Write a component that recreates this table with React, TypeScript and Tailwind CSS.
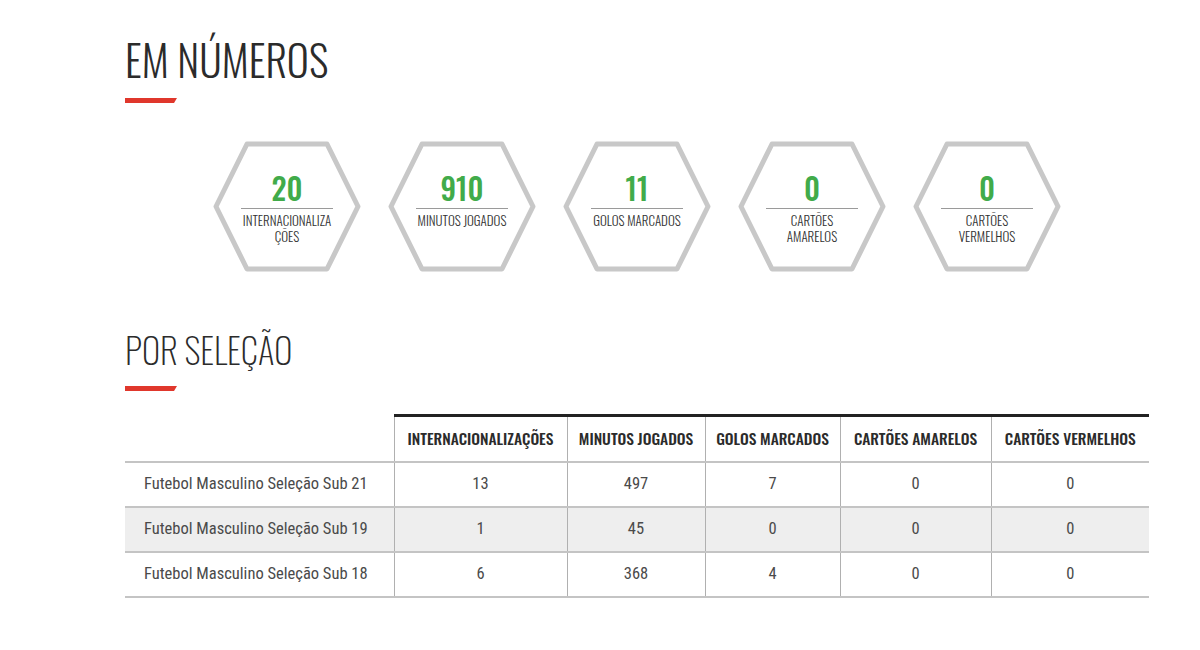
const stats = [
  { value: "20", label: "INTERNACIONALIZA\nÇÕES" },
  { value: "910", label: "MINUTOS JOGADOS" },
  { value: "11", label: "GOLOS MARCADOS" },
  { value: "0", label: "CARTÕES\nAMARELOS" },
  { value: "0", label: "CARTÕES\nVERMELHOS" },
];

const headers = [
  "INTERNACIONALIZAÇÕES",
  "MINUTOS JOGADOS",
  "GOLOS MARCADOS",
  "CARTÕES AMARELOS",
  "CARTÕES VERMELHOS",
];

const rows = [
  { name: "Futebol Masculino Seleção Sub 21", vals: ["13", "497", "7", "0", "0"] },
  { name: "Futebol Masculino Seleção Sub 19", vals: ["1", "45", "0", "0", "0"] },
  { name: "Futebol Masculino Seleção Sub 18", vals: ["6", "368", "4", "0", "0"] },
];

function RedBar() {
  return (
    <svg width="52" height="5" viewBox="0 0 52 5" className="block">
      <polygon points="0,0 52,0 49,5 0,5" fill="#e0372c" />
    </svg>
  );
}

function Hex({ value, label }: { value: string; label: string }) {
  return (
    <div className="relative w-[148px] h-[131px] shrink-0">
      <svg width="148" height="131" viewBox="0 0 148 131" className="absolute inset-0">
        <polygon
          points="3,65.5 34,3 114,3 145,65.5 114,128 34,128"
          fill="none"
          stroke="#c8c8c8"
          strokeWidth="5"
          strokeLinejoin="round"
        />
      </svg>
      <div className="relative flex flex-col items-center pt-[28px] font-['Oswald']">
        <div className="text-[30px] leading-[38px] font-medium text-[#41ab4a]">{value}</div>
        <div className="w-[92px] h-px bg-[#9a9a9a] mt-[1px]" />
        <div className="mt-[3px] text-[13px] leading-[16px] font-light text-[#333] text-center whitespace-pre-line">
          {label}
        </div>
      </div>
    </div>
  );
}

export default function App() {
  return (
    <div className="w-[1200px] h-[650px] bg-white">
      <div className="ml-[125px] w-[1024px] pt-[30px]">
        <h1 className="font-['Oswald'] font-light text-[42px] leading-[58px] text-[#2b2b2b]">
          EM NÚMEROS
        </h1>
        <div className="mt-[10px]">
          <RedBar />
        </div>

        <div className="mt-[38px] flex justify-center gap-[27px]">
          {stats.map((s, i) => (
            <Hex key={i} value={s.value} label={s.label} />
          ))}
        </div>

        <h2 className="mt-[54px] font-['Oswald'] font-extralight text-[35px] leading-[46px] text-[#2b2b2b]">
          POR SELEÇÃO
        </h2>
        <div className="mt-[14px]">
          <RedBar />
        </div>

        <table className="mt-[23px] w-[1024px] table-fixed border-collapse">
          <colgroup>
            <col className="w-[269px]" />
            <col className="w-[173px]" />
            <col className="w-[138px]" />
            <col className="w-[135px]" />
            <col className="w-[151px]" />
            <col className="w-[158px]" />
          </colgroup>
          <thead>
            <tr className="h-[46px] border-b-2 border-[#c4c4c4]">
              <th />
              {headers.map((h) => (
                <th
                  key={h}
                  className="border-t-[3px] border-t-[#222] border-l border-l-[#b0b0b0] font-['Oswald'] font-medium text-[15.5px] text-[#2b2b2b] text-center"
                >
                  {h}
                </th>
              ))}
            </tr>
          </thead>
          <tbody>
            {rows.map((r, ri) => (
              <tr
                key={r.name}
                className={`h-[45px] border-b-2 border-[#c4c4c4] ${ri === 1 ? "bg-[#eeeeee]" : "bg-white"}`}
              >
                <td className="pl-[19px] font-['Roboto_Condensed'] text-[16.5px] text-[#4a4a4a]">{r.name}</td>
                {r.vals.map((v, vi) => (
                  <td
                    key={vi}
                    className="border-l border-l-[#b0b0b0] text-center font-['Roboto_Condensed'] text-[16.5px] text-[#4a4a4a]"
                  >
                    {v}
                  </td>
                ))}
              </tr>
            ))}
          </tbody>
        </table>
      </div>
    </div>
  );
}
